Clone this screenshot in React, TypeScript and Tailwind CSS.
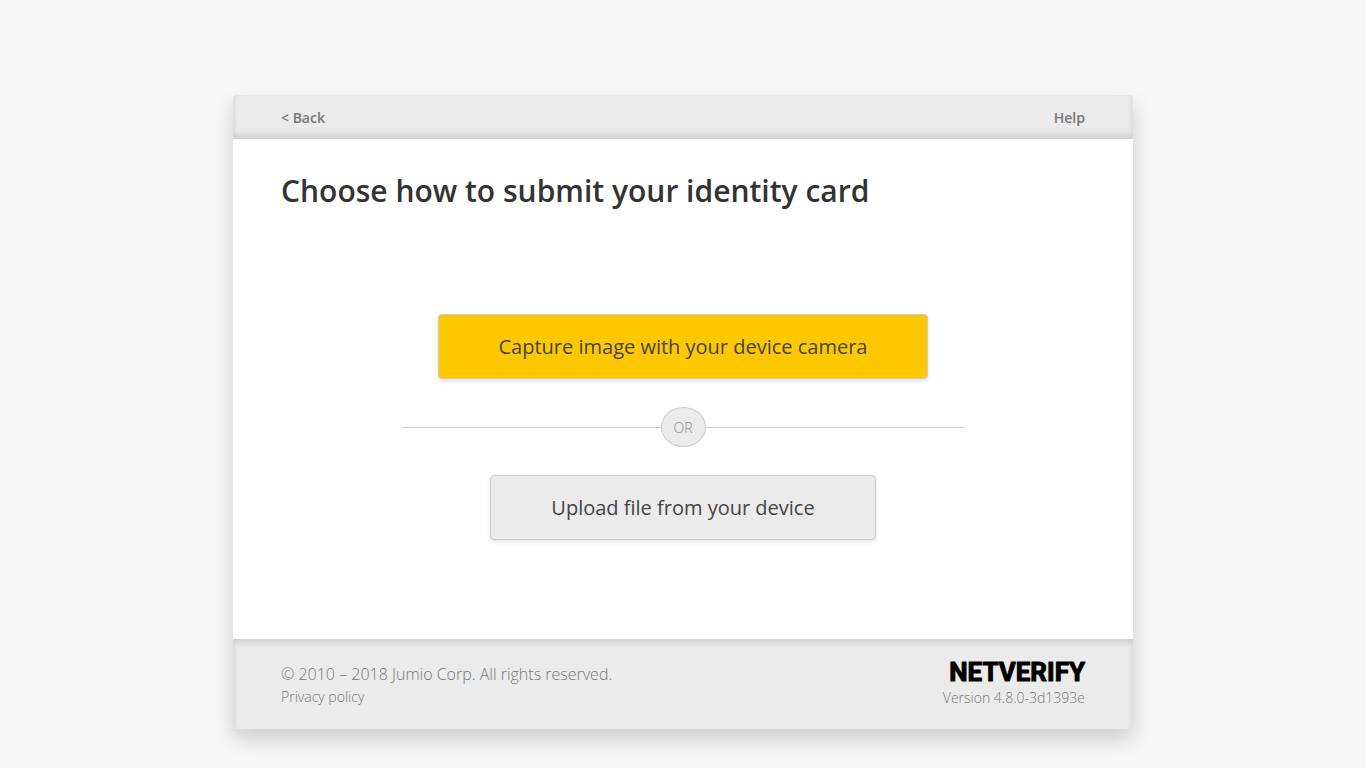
import React from "react";

function Wordmark() {
  return (
    <svg
      className="h-6 w-[136px] overflow-visible"
      viewBox="0 0 136 24"
      role="img"
      aria-label="Netverify"
    >
      <text
        x="136"
        y="21"
        textAnchor="end"
        className="fill-black stroke-black font-['Roboto',sans-serif] text-[26px] font-bold"
        strokeWidth="1"
        strokeLinejoin="round"
      >
        NETVERIFY
      </text>
    </svg>
  );
}

function TopBar() {
  return (
    <header className="flex h-11 items-center justify-between rounded-t bg-[#ebebeb] px-12 pt-px text-sm font-semibold text-[#777] shadow-[inset_0_-4px_6px_rgba(0,0,0,0.12)]">
      <a href="#back">&lt; Back</a>
      <a href="#help">Help</a>
    </header>
  );
}

function Divider() {
  return (
    <div className="my-7 flex w-full max-w-[562px] items-center">
      <span className="h-px flex-1 bg-[#ccc]" />
      <span className="flex h-10 w-[45px] items-center justify-center rounded-[50%] border border-[#ccc] bg-[#ebebeb] pt-0.5 text-sm font-light text-[#888]">
        OR
      </span>
      <span className="h-px flex-1 bg-[#ccc]" />
    </div>
  );
}

function BottomBar() {
  return (
    <footer className="flex items-start justify-between rounded-b bg-[#ebebeb] px-12 py-[21px] font-light text-[#777] shadow-[inset_0_4px_6px_rgba(0,0,0,0.12)]">
      <div>
        <p className="text-base leading-7">© 2010 – 2018 Jumio Corp. All rights reserved.</p>
        <a href="#privacy" className="block text-sm leading-[18px]">
          Privacy policy
        </a>
      </div>
      <div className="flex flex-col items-end">
        <Wordmark />
        <p className="mt-1 text-sm leading-5">Version 4.8.0-3d1393e</p>
      </div>
    </footer>
  );
}

export default function App() {
  return (
    <div className="min-h-screen bg-[#f7f7f7] px-4 pt-[95px] pb-[39px] font-['Open_Sans',sans-serif]">
      <div className="mx-auto max-w-[900px] rounded shadow-[0_10px_20px_rgba(0,0,0,0.17)]">
        <TopBar />
        <main className="bg-white px-12 pt-8 pb-[99px]">
          <h1 className="text-[30px] leading-10 font-semibold text-[#333]">
            Choose how to submit your identity card
          </h1>
          <div className="mt-[103px] flex flex-col items-center">
            <button
              type="button"
              className="h-[65px] rounded border border-[#ccc] bg-[#fec800] px-[60px] text-xl text-[#444] shadow-[0_2px_4px_rgba(0,0,0,0.12)]"
            >
              Capture image with your device camera
            </button>
            <Divider />
            <button
              type="button"
              className="h-[65px] rounded border border-[#ccc] bg-[#ebebeb] px-[60px] text-xl text-[#444] shadow-[0_2px_4px_rgba(0,0,0,0.1)]"
            >
              Upload file from your device
            </button>
          </div>
        </main>
        <BottomBar />
      </div>
    </div>
  );
}
